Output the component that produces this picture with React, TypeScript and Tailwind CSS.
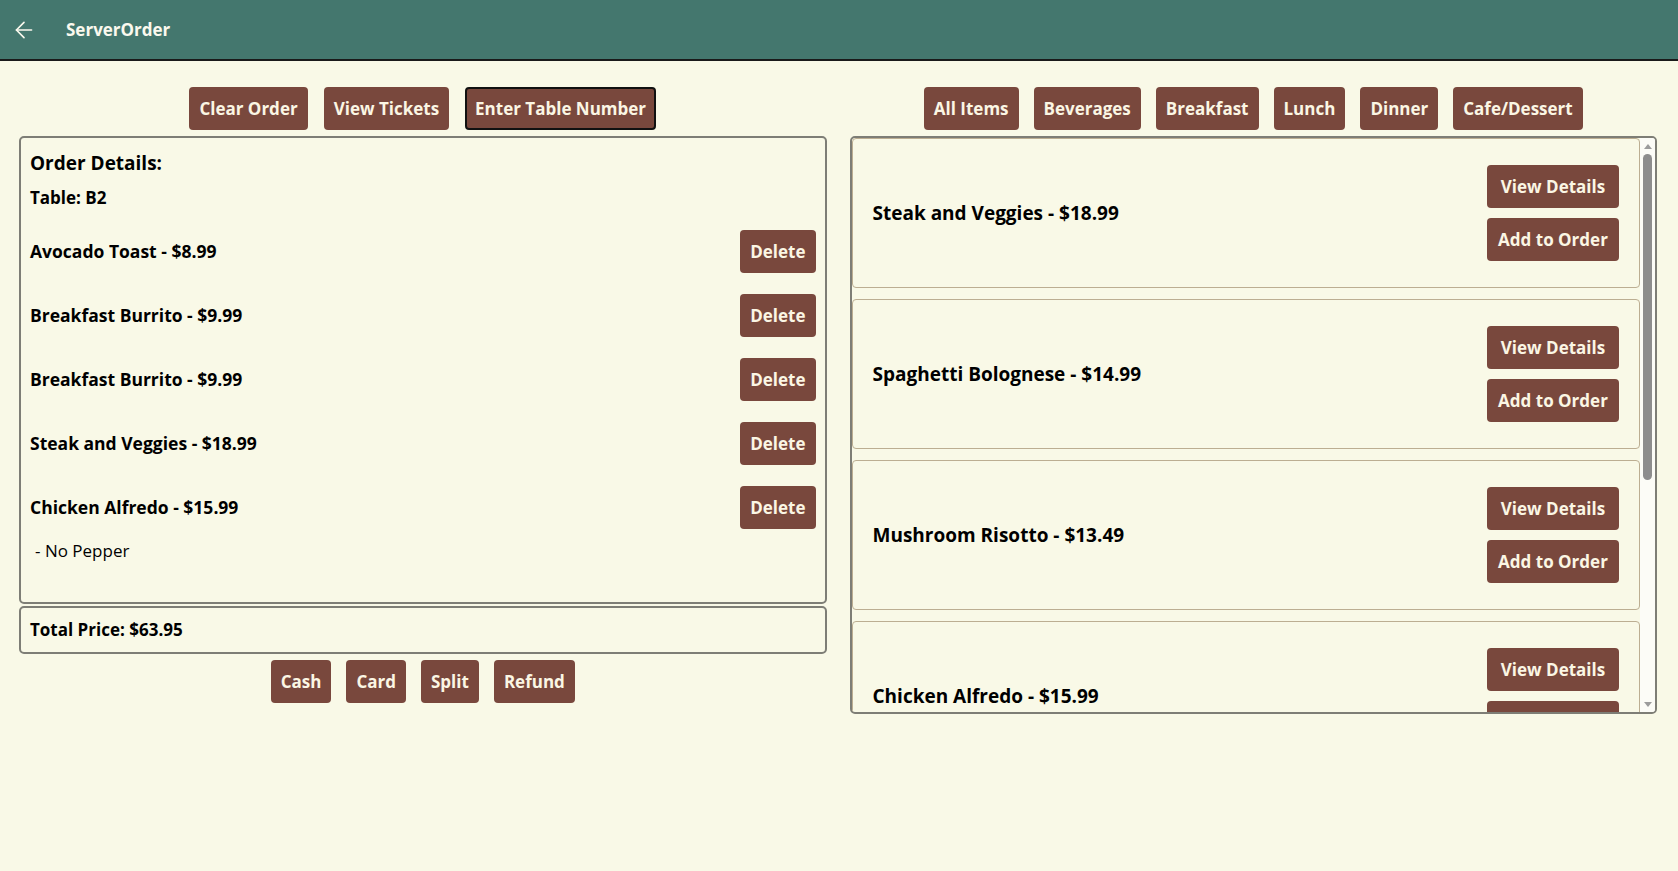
import { ArrowLeft } from 'lucide-react'

type OrderLine = { name: string; price: string; notes?: string[] }

const ORDER: OrderLine[] = [
  { name: 'Avocado Toast', price: '$8.99' },
  { name: 'Breakfast Burrito', price: '$9.99' },
  { name: 'Breakfast Burrito', price: '$9.99' },
  { name: 'Steak and Veggies', price: '$18.99' },
  { name: 'Chicken Alfredo', price: '$15.99', notes: ['No Pepper'] },
]

const MENU = [
  { name: 'Steak and Veggies', price: '$18.99' },
  { name: 'Spaghetti Bolognese', price: '$14.99' },
  { name: 'Mushroom Risotto', price: '$13.49' },
  { name: 'Chicken Alfredo', price: '$15.99' },
  { name: 'Grilled Salmon', price: '$19.99' },
  { name: 'BBQ Ribs', price: '$21.49' },
]

const CATEGORIES = ['All Items', 'Beverages', 'Breakfast', 'Lunch', 'Dinner', 'Cafe/Dessert']

function Btn({ children, focused }: { children: React.ReactNode; focused?: boolean }) {
  return (
    <button
      className={`h-[43px] shrink-0 rounded-[4px] bg-[#79483d] px-[8px] text-[17px] font-bold leading-none text-[#fbf6e4] ${
        focused ? 'border-2 border-[#111]' : 'border-2 border-transparent'
      }`}
    >
      {children}
    </button>
  )
}

export default function App() {
  return (
    <div
      className="min-h-[871px] bg-[#f9f9e7] text-black"
      style={{ fontFamily: '"Open Sans", "Noto Sans", sans-serif' }}
    >
      {/* top bar */}
      <header className="flex h-[61px] items-center border-b-2 border-[#1a1a1a] bg-[#44776e] text-[#fbf9ee]">
        <ArrowLeft className="ml-[11px] h-[26px] w-[26px]" strokeWidth={1.5} />
        <span className="ml-[29px] text-[17px] font-bold">ServerOrder</span>
      </header>

      <main className="flex gap-[23px] px-[19px] pr-[21px] pt-[26px]">
        {/* order side */}
        <section className="flex flex-1 flex-col">
          <div className="flex justify-center gap-[16px]">
            <Btn>Clear Order</Btn>
            <Btn>View Tickets</Btn>
            <Btn focused>Enter Table Number</Btn>
          </div>

          <div className="mt-[6px] h-[468px] rounded-[5px] border-2 border-[#7e7e76] pl-[9px] pr-[9px] pt-[13px]">
            <h2 className="text-[19px] font-bold leading-[24px]">Order Details:</h2>
            <p className="mt-[12px] text-[17px] font-bold leading-[22px]">Table: B2</p>
            <ul className="mt-[21px] flex flex-col gap-[21px]">
              {ORDER.map((o, i) => (
                <li key={i}>
                  <div className="flex h-[43px] items-center justify-between">
                    <span className="text-[17.5px] font-bold">
                      {o.name} - {o.price}
                    </span>
                    <Btn>Delete</Btn>
                  </div>
                  {o.notes?.map((n) => (
                    <p key={n} className="mt-[11px] pl-[5px] text-[17px] leading-[22px]">
                      - {n}
                    </p>
                  ))}
                </li>
              ))}
            </ul>
          </div>

          <div className="mt-[2px] flex h-[48px] items-center rounded-[5px] border-2 border-[#7e7e76] pl-[9px]">
            <span className="text-[17px] font-bold">Total Price: $63.95</span>
          </div>

          <div className="mt-[6px] flex justify-center gap-[15px]">
            <Btn>Cash</Btn>
            <Btn>Card</Btn>
            <Btn>Split</Btn>
            <Btn>Refund</Btn>
          </div>
        </section>

        {/* menu side */}
        <section className="flex flex-1 flex-col">
          <div className="flex justify-center gap-[15px]">
            {CATEGORIES.map((c) => (
              <Btn key={c}>{c}</Btn>
            ))}
          </div>

          <div className="mt-[6px] flex h-[578px] overflow-hidden rounded-[5px] border-2 border-[#7e7e76]">
            <div className="flex min-w-0 flex-1 flex-col gap-[11px] overflow-hidden">
              {MENU.map((m) => (
                <div
                  key={m.name}
                  className="flex shrink-0 items-center justify-between rounded-[4px] border border-[#bcae92] px-[20px] py-[26px]"
                >
                  <span className="text-[19px] font-bold">
                    {m.name} - {m.price}
                  </span>
                  <div className="flex w-[132px] flex-col gap-[10px]">
                    <Btn>View Details</Btn>
                    <Btn>Add to Order</Btn>
                  </div>
                </div>
              ))}
            </div>

            {/* scrollbar */}
            <div className="flex w-[15px] shrink-0 flex-col items-center bg-[#fcfcf7]">
              <div className="flex h-[16px] items-center justify-center">
                <div className="h-0 w-0 border-x-[4px] border-b-[5px] border-x-transparent border-b-[#9c9c9c]" />
              </div>
              <div className="h-[326px] w-[9px] rounded-full bg-[#8d8d8d]" />
              <div className="flex-1" />
              <div className="flex h-[16px] items-center justify-center">
                <div className="h-0 w-0 border-x-[4px] border-t-[5px] border-x-transparent border-t-[#9c9c9c]" />
              </div>
            </div>
          </div>
        </section>
      </main>
    </div>
  )
}
